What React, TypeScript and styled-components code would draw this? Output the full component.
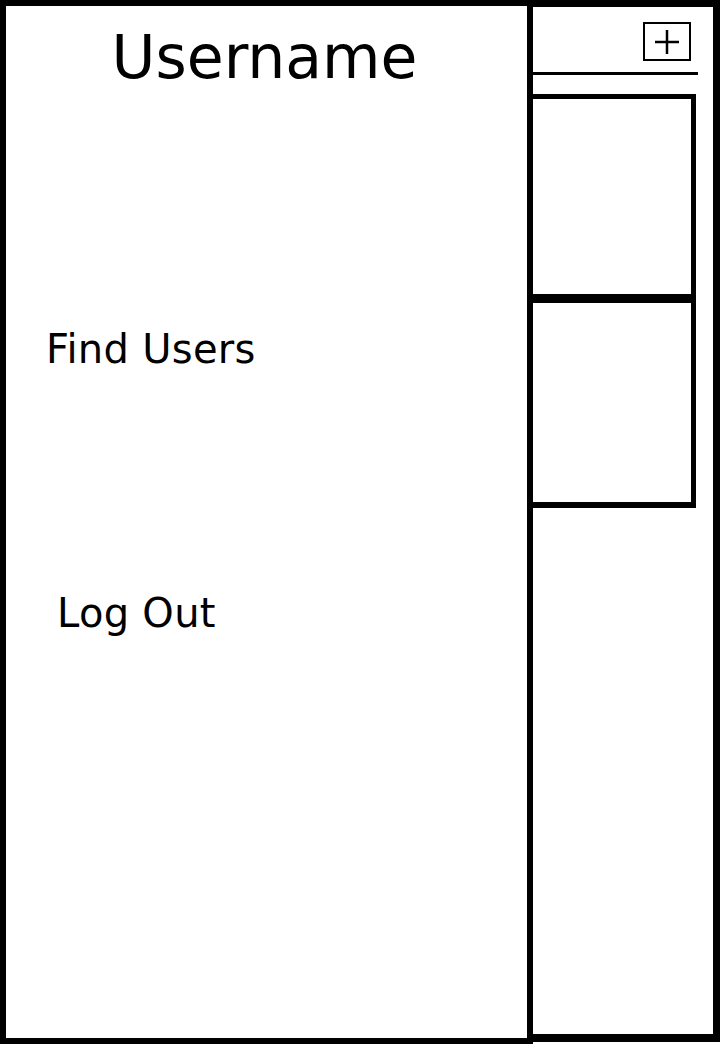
import styled, { createGlobalStyle } from 'styled-components';

const GlobalStyle = createGlobalStyle`
  html, body {
    margin: 0;
    padding: 0;
    background: #fff;
  }
  body {
    font-family: 'DejaVu Sans', Verdana, sans-serif;
    color: #000;
  }
`;

const Screen = styled.div`
  display: flex;
  align-items: flex-start;
  width: 720px;
  height: 1044px;
  overflow: hidden;
`;

const Sidebar = styled.nav`
  box-sizing: border-box;
  width: 533px;
  height: 1044px;
  border: 6px solid #000;
  display: flex;
  flex-direction: column;
`;

const Title = styled.h1`
  margin: 21px 0 0;
  padding-right: 4px;
  font-size: 60px;
  font-weight: normal;
  line-height: 1;
  text-align: center;
`;

const NavLink = styled.a<{ $indent: number; $top: number }>`
  display: block;
  margin: ${(p) => p.$top}px 0 0 ${(p) => p.$indent - 6}px;
  font-size: 40px;
  line-height: 1;
  letter-spacing: 0.3px;
  color: #000;
  text-decoration: none;
  cursor: pointer;
`;

const ChatPanel = styled.aside`
  box-sizing: border-box;
  width: 187px;
  height: 1042px;
  border-top: 7px solid #000;
  border-right: 7px solid #000;
  border-bottom: 8px solid #000;
  display: flex;
  flex-direction: column;
`;

const PanelHeader = styled.div`
  height: 65px;
  box-sizing: border-box;
  padding: 15px 22px 0 0;
  display: flex;
  justify-content: flex-end;
  align-items: flex-start;
`;

const AddButton = styled.button`
  box-sizing: border-box;
  width: 48px;
  height: 39px;
  border: 2px solid #000;
  background: #fff;
  padding: 0;
  display: flex;
  align-items: center;
  justify-content: center;
  cursor: pointer;
`;

const Rule = styled.div`
  height: 3px;
  width: 165px;
  background: #000;
`;

const RoomList = styled.div`
  margin-top: 19px;
  display: flex;
  flex-direction: column;
`;

const Room = styled.div<{ $top: number; $bottom: number; $height: number }>`
  box-sizing: border-box;
  width: 163px;
  height: ${(p) => p.$height}px;
  border-top: ${(p) => p.$top}px solid #000;
  border-right: 5px solid #000;
  border-bottom: ${(p) => p.$bottom}px solid #000;
`;

export default function App() {
  return (
    <>
      <GlobalStyle />
      <Screen>
        <Sidebar>
          <Title>Username</Title>
          <NavLink $indent={46} $top={242}>
            Find Users
          </NavLink>
          <NavLink $indent={57} $top={224}>
            Log Out
          </NavLink>
        </Sidebar>
        <ChatPanel>
          <PanelHeader>
            <AddButton aria-label="Add">
              <svg width="26" height="26" viewBox="0 0 26 26">
                <path d="M13 1v24M1 13h24" stroke="#000" strokeWidth="2.5" fill="none" />
              </svg>
            </AddButton>
          </PanelHeader>
          <Rule />
          <RoomList>
            <Room $top={5} $bottom={5} $height={205} />
            <Room $top={4} $bottom={6} $height={209} />
          </RoomList>
        </ChatPanel>
      </Screen>
    </>
  );
}
